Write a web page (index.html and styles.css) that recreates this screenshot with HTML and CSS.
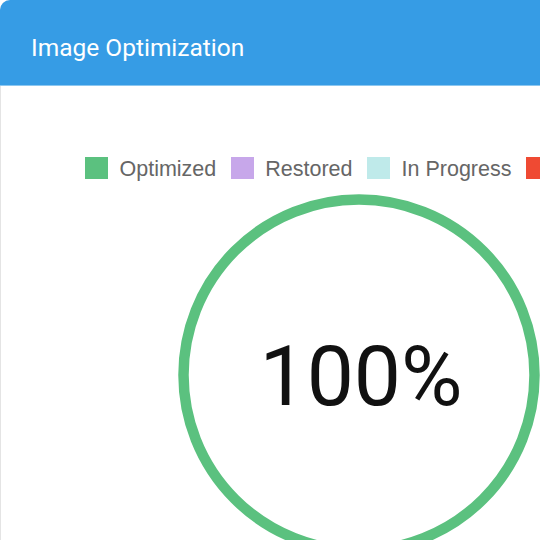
FILE: index.html
```html
<!DOCTYPE html>
<html>
<head>
<meta charset="utf-8">
<link rel="stylesheet" href="styles.css">
</head>
<body>
<div class="card">
  <div class="card-header">Image Optimization</div>
  <div class="card-body">
    <div class="legend">
      <div class="legend-item"><span class="swatch swatch-green"></span>Optimized</div>
      <div class="legend-item"><span class="swatch swatch-purple"></span>Restored</div>
      <div class="legend-item"><span class="swatch swatch-cyan"></span>In Progress</div>
      <div class="legend-item"><span class="swatch swatch-red"></span></div>
    </div>
    <div class="chart">
      <svg class="ring" width="372" height="372" viewBox="0 0 372 372">
        <circle cx="186" cy="186" r="175.5" fill="none" stroke="#5bc17f" stroke-width="10.5"/>
      </svg>
      <div class="percent">100%</div>
    </div>
  </div>
</div>
</body>
</html>
```

FILE: styles.css
```css
html, body {
  margin: 0;
  padding: 0;
  background: #ffffff;
}
body {
  width: 540px;
  height: 540px;
  overflow: hidden;
}
.card {
  width: 760px;
  height: 620px;
  border: 1px solid #e4e4e4;
  border-top: none;
  border-radius: 10px 10px 0 0;
  background: #ffffff;
  box-sizing: border-box;
}
.card-header {
  height: 86px;
  box-sizing: border-box;
  background: #369ce5;
  border-bottom: 1px solid #8cc7f0;
  border-radius: 10px 10px 0 0;
  color: #ffffff;
  font-family: Roboto, "Noto Sans", sans-serif;
  font-size: 24.5px;
  padding: 33px 0 0 31px;
  line-height: 30px;
  margin-left: -1px;
}
.card-body {
  padding-top: 71px;
}
.legend {
  display: flex;
  align-items: center;
  gap: 14.5px;
  margin-left: 84px;
  height: 22px;
  white-space: nowrap;
}
.legend-item {
  display: flex;
  align-items: center;
  gap: 11.5px;
  font-family: "Liberation Sans", Arial, sans-serif;
  font-size: 21.5px;
  color: #666666;
  padding-top: 3px;
}
.swatch {
  display: block;
  width: 23px;
  height: 22px;
  margin-top: -3px;
  box-sizing: border-box;
}
.swatch-green { background: #5bc17f; }
.swatch-purple { background: #c7a7ea; }
.swatch-cyan { background: #bfeaea; }
.swatch-red { background: #ef4a33; }
.chart {
  display: grid;
  place-items: center;
  width: 372px;
  height: 372px;
  margin: 10px 0 0 172px;
}
.chart > * {
  grid-area: 1 / 1;
}
.percent {
  font-family: Roboto, "Noto Sans", sans-serif;
  font-size: 84px;
  color: #111111;
  line-height: 1;
  margin: 4px 0 0 4px;
}
```
